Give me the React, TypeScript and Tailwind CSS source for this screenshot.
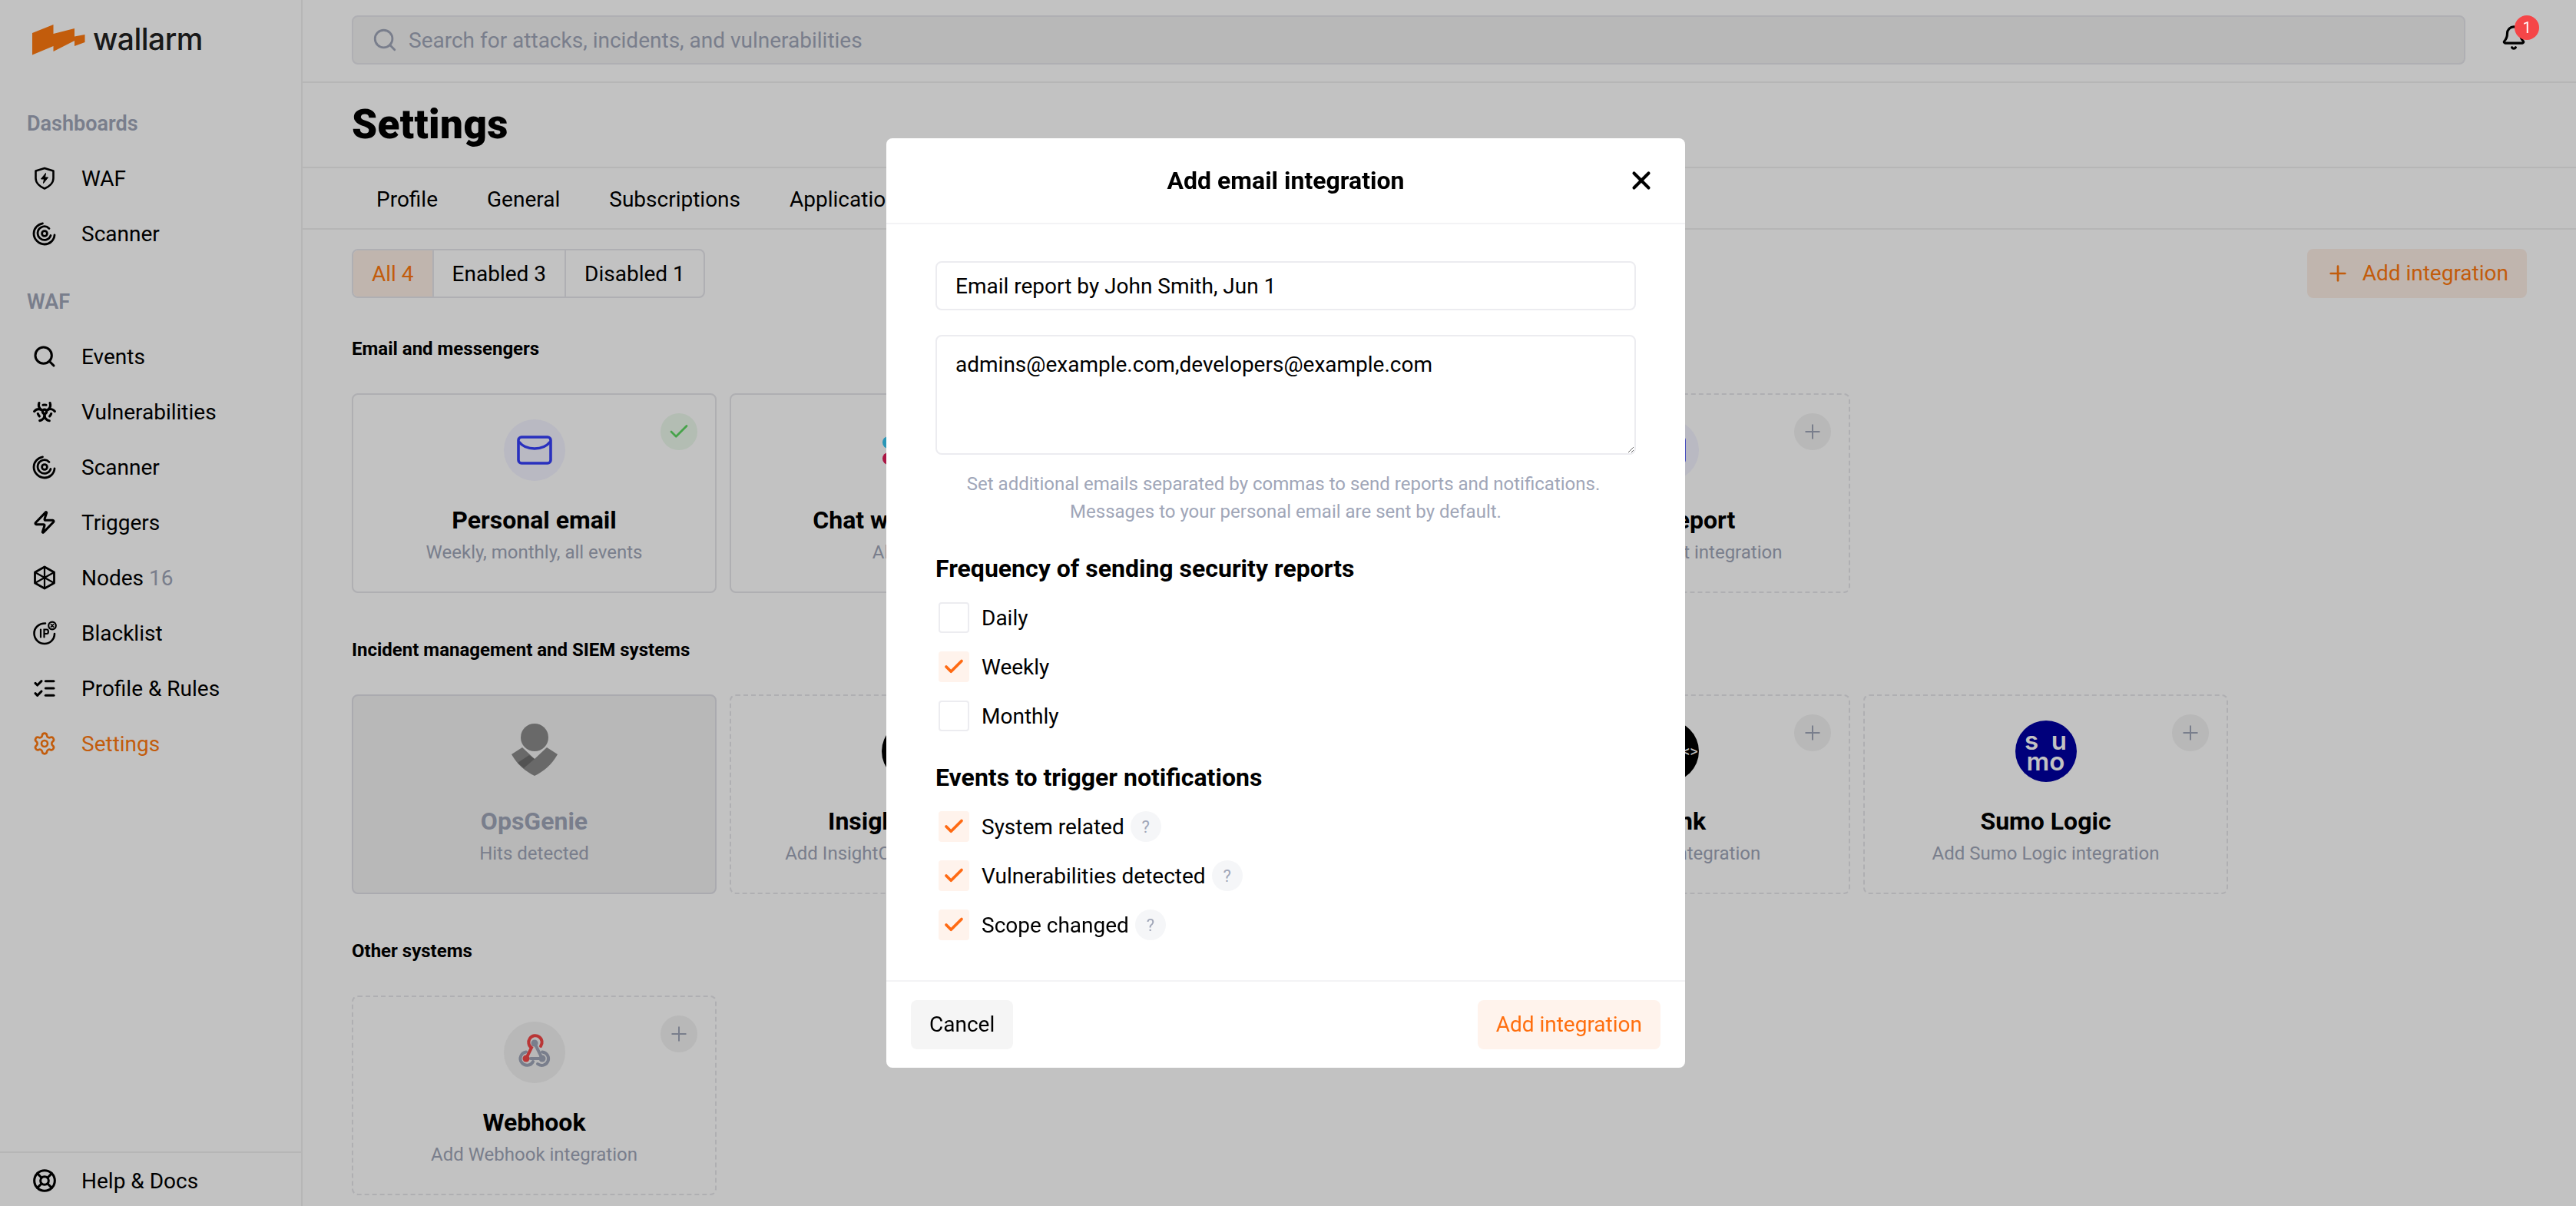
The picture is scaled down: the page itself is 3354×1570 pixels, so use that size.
import type { ReactNode } from 'react'
import { Bell, Biohazard, Check, LifeBuoy, ListChecks, Plus, Search, Settings, X, Zap } from 'lucide-react'

function ShieldIcon() {
  return (
    <svg width="32" height="32" viewBox="0 0 32 32" fill="none" stroke="currentColor" strokeWidth="2.6" strokeLinejoin="round">
      <path d="M16 3 L27.5 6.5 V16 C27.5 22 22 27 16 29.5 C10 27 4.5 22 4.5 16 V6.5 Z" />
      <path d="M17.5 9.5 L11.5 17 H15.5 L14.5 22.5 L20.5 15 H16.5 Z" fill="currentColor" strokeWidth="1" />
    </svg>
  )
}

function ScannerIcon() {
  return (
    <svg width="32" height="32" viewBox="0 0 32 32" fill="none" stroke="currentColor" strokeWidth="2.8" strokeLinecap="round">
      <path d="M29 18 C28.5 25 22.5 30 16 30 C8.5 30 2 23.5 2 16 C2 9.5 7 4 13.5 2.8" />
      <path d="M24 18.5 C22 24.5 15 26 10.5 22.5 C5.5 18.5 6 11 11.5 8 C15 6 19 6.5 22 9.5" />
      <circle cx="16" cy="16" r="3.4" />
    </svg>
  )
}

function NodesIcon() {
  return (
    <svg width="32" height="32" viewBox="0 0 32 32" fill="none" stroke="currentColor" strokeWidth="2.8" strokeLinejoin="round">
      <path d="M16 2 L28.5 9 V23 L16 30 L3.5 23 V9 Z" />
      <path d="M16 2 V30 M3.5 9 L28.5 23 M28.5 9 L3.5 23" strokeWidth="2.2" />
    </svg>
  )
}

function BlacklistIcon() {
  return (
    <svg width="32" height="32" viewBox="0 0 32 32" fill="none" stroke="currentColor" strokeWidth="2.6" strokeLinecap="round">
      <path d="M29 17 C29 24.5 23 30 16 30 C8.5 30 2.5 24 2.5 16.5 C2.5 9 8.5 3.5 17 3.5" />
      <path d="M11 11.5 V21.5 M15.5 21.5 V11.5 H19 C21.5 11.5 21.5 17 19 17 H15.5" strokeWidth="2.2" />
      <circle cx="26" cy="6.5" r="4.8" strokeWidth="2.2" />
      <path d="M24.4 4.9 L27.6 8.1 M27.6 4.9 L24.4 8.1" strokeWidth="1.6" />
    </svg>
  )
}

function Logo() {
  return (
    <div className="flex h-[107px] items-start pl-[42px] pt-[32px]">
      <svg width="69" height="40" viewBox="0 0 69 40" fill="#ff7a10">
        <path d="M0 11 L27.5 0 V12 L55 5 V15.5 L68.5 13 V23 L55 28 V21 L27.5 35 V28 L0 39.5 Z" />
      </svg>
      <span className="ml-[10px] mt-[-5px] font-[Inter,sans-serif] text-[39px] font-medium leading-[48px] tracking-[-0.5px] text-[#222]">wallarm</span>
    </div>
  )
}

function NavLabel({ children, className }: { children: ReactNode; className: string }) {
  return <div className={`h-9 pl-[35px] text-[27px] font-semibold leading-9 text-[#a0a6b8] ${className}`}>{children}</div>
}

function NavItem({ icon, label, count, active }: { icon: ReactNode; label: string; count?: number; active?: boolean }) {
  return (
    <div className={`flex h-[72px] items-center gap-8 pl-[42px] text-[28px] ${active ? 'text-[#ff7a10]' : 'text-black'}`}>
      <span className="flex h-8 w-8 items-center justify-center">{icon}</span>
      <span className="pt-[1px]">
        {label}
        {count && <span className="text-[#a0a6b8]"> {count}</span>}
      </span>
    </div>
  )
}

function Sidebar() {
  return (
    <aside className="flex h-full w-[394px] shrink-0 flex-col border-r-2 border-[#f0f0f0]">
      <Logo />
      <NavLabel className="mt-[36px]">Dashboards</NavLabel>
      <nav className="mt-[17px]">
        <NavItem icon={<ShieldIcon />} label="WAF" />
        <NavItem icon={<ScannerIcon />} label="Scanner" />
      </nav>
      <NavLabel className="mt-[35px]">WAF</NavLabel>
      <nav className="mt-[17px]">
        <NavItem icon={<Search size={32} strokeWidth={2.3} />} label="Events" />
        <NavItem icon={<Biohazard size={34} strokeWidth={2.4} />} label="Vulnerabilities" />
        <NavItem icon={<ScannerIcon />} label="Scanner" />
        <NavItem icon={<Zap size={32} strokeWidth={2.3} />} label="Triggers" />
        <NavItem icon={<NodesIcon />} label="Nodes" count={16} />
        <NavItem icon={<BlacklistIcon />} label="Blacklist" />
        <NavItem icon={<ListChecks size={32} strokeWidth={2.3} />} label="Profile & Rules" />
        <NavItem icon={<Settings size={34} strokeWidth={2} />} label="Settings" active />
      </nav>
      <div className="mt-auto h-[71px] border-t-2 border-[#f0f0f0]">
        <NavItem icon={<LifeBuoy size={32} strokeWidth={2.3} />} label="Help & Docs" />
      </div>
    </aside>
  )
}

function MailIcon() {
  return (
    <svg width="46" height="38" viewBox="0 0 46 38" fill="none" stroke="#3640fa" strokeWidth="3.6" strokeLinejoin="round">
      <rect x="2" y="2" width="42" height="34" rx="4" />
      <path d="M2.5 8 C12 20 34 20 43.5 8" />
    </svg>
  )
}

function SlackIcon() {
  return (
    <svg width="80" height="80" viewBox="0 0 80 80" fill="none" strokeWidth="16" strokeLinecap="round">
      <path d="M9 30 H34" stroke="#36c5f0" />
      <path d="M9 51 H34" stroke="#e01e5a" />
      <path d="M46 10 V34" stroke="#2eb67d" />
      <path d="M46 46 V70" stroke="#ecb22e" />
    </svg>
  )
}

function OpsGenieIcon() {
  return (
    <svg width="80" height="80" viewBox="0 0 80 80">
      <circle cx="40" cy="22" r="18" fill="#8b8b8b" />
      <path d="M10 44 L24 35 L40 50 L56 35 L70 44 C62 58 52 66 40 72 C28 66 18 58 10 44 Z" fill="#8b8b8b" />
      <path d="M18 55 L33 45 L40 50 L26 62 Z" fill="#6e6e6e" />
    </svg>
  )
}

function WebhookIcon() {
  return (
    <svg width="80" height="80" viewBox="0 0 80 80" fill="none" strokeWidth="4" strokeLinecap="round">
      <path d="M40 28 L50 48 H35" stroke="#a0a6b8" />
      <path d="M50 39.5 A8.7 8.7 0 1 1 44 55 M29 39.5 A8.7 8.7 0 1 0 38 52" stroke="#a0a6b8" />
      <circle cx="40" cy="28" r="4.5" fill="#a0a6b8" />
      <circle cx="50" cy="48" r="4.5" fill="#a0a6b8" />
      <path d="M29 48 L36 34 A8.7 8.7 0 1 1 48 32" stroke="#f44848" />
      <circle cx="29" cy="48" r="4.5" fill="#f44848" />
    </svg>
  )
}

type CardProps = {
  icon: ReactNode
  iconBg?: string
  title: string
  subtitle: string
  status?: 'enabled' | 'disabled' | 'add'
}

function IntegrationCard({ icon, iconBg = '', title, subtitle, status = 'add' }: CardProps) {
  const frame =
    status === 'add'
      ? 'border-dashed border-[#e6e6ea]'
      : status === 'disabled'
        ? 'border-[#e0e0e6] bg-[#f2f2f2]'
        : 'border-[#e6e6ea]'
  return (
    <div className={`relative flex h-[260px] flex-col items-center rounded-lg border-2 pt-8 ${frame}`}>
      {status === 'add' && (
        <span className="absolute right-[23px] top-[24px] flex h-12 w-12 items-center justify-center rounded-full bg-[#f2f2f2] text-[#a0a6b8]">
          <Plus size={30} strokeWidth={1.6} />
        </span>
      )}
      {status === 'enabled' && (
        <span className="absolute right-[23px] top-[24px] flex h-12 w-12 items-center justify-center rounded-full bg-[#ebf9eb] text-[#5ed662]">
          <Check size={30} strokeWidth={2.2} />
        </span>
      )}
      <div className={`flex h-20 w-20 items-center justify-center rounded-full ${iconBg}`}>{icon}</div>
      <div className={`mt-[31px] text-[32px] font-bold leading-10 ${status === 'disabled' ? 'text-[#a0a6b8]' : 'text-black'}`}>{title}</div>
      <div className="mt-[6px] text-[24px] leading-8 text-[#a0a6b8]">{subtitle}</div>
    </div>
  )
}

function CardGrid({ children }: { children: ReactNode }) {
  return <div className="mt-10 grid grid-cols-[repeat(5,475px)] gap-x-[17px]">{children}</div>
}

function SectionLabel({ children, className }: { children: ReactNode; className: string }) {
  return <h3 className={`h-9 text-[24px] font-bold leading-9 text-black ${className}`}>{children}</h3>
}

function MainPage() {
  const tabs = ['Profile', 'General', 'Subscriptions', 'Applications', 'Integrations', 'Users', 'Activity log']
  return (
    <main className="flex h-full min-w-0 flex-1 flex-col">
      <div className="relative flex h-[108px] items-start border-b-2 border-[#f0f0f0] pl-16 pr-[64px] pt-5">
        <div className="flex h-16 w-[2752px] items-center gap-[14px] rounded-lg border-2 border-[#e6e6ec] bg-[#f2f2f2] pl-[24px] text-[#a0a6b8]">
          <Search size={34} strokeWidth={2} />
          <input className="w-[1200px] bg-transparent pt-[2px] text-[28px] outline-none placeholder:text-[#a0a6b8]" placeholder="Search for attacks, incidents, and vulnerabilities" />
        </div>
        <Bell className="ml-[46px] mt-[12px] text-black" size={34} strokeWidth={2.2} />
        <span className="absolute left-[2880px] top-[20px] z-20 flex h-8 w-8 items-center justify-center rounded-full bg-[#f54648] text-[20px] text-white">1</span>
      </div>
      <div className="flex h-[111px] items-center border-b-2 border-[#f0f0f0] pl-16">
        <h1 className="text-[53px] font-black tracking-[0.4px] text-black">Settings</h1>
      </div>
      <div className="flex h-[80px] items-center gap-[64px] border-b-2 border-[#f0f0f0] pl-24 pt-[3px] text-[28px] text-black">
        {tabs.map((tab) => (
          <span key={tab}>{tab}</span>
        ))}
      </div>
      <div className="px-16 pt-[25px]">
        <div className="flex items-start justify-between">
          <div className="flex h-16 overflow-hidden rounded-lg border-2 border-[#e6e6ec] text-[28px]">
            <span className="flex items-center bg-[#fdeee5] px-6 pt-[1px] text-[#ff7a10]">All 4</span>
            <span className="flex items-center border-l-2 border-[#e6e6ec] px-6 pt-[1px] text-black">Enabled 3</span>
            <span className="flex items-center border-l-2 border-[#e6e6ec] px-6 pt-[1px] text-black">Disabled 1</span>
          </div>
          <button className="flex h-16 items-center gap-4 rounded-lg bg-[#fdeee5] pl-6 pr-6 text-[28px] text-[#ff7a10]">
            <Plus size={32} strokeWidth={2} />
            Add integration
          </button>
        </div>

        <SectionLabel className="mt-12">Email and messengers</SectionLabel>
        <CardGrid>
          <IntegrationCard status="enabled" iconBg="bg-[#f3f3ff]" icon={<MailIcon />} title="Personal email" subtitle="Weekly, monthly, all events" />
          <IntegrationCard status="enabled" icon={<SlackIcon />} title="Chat with Support" subtitle="All events" />
          <IntegrationCard icon={<span className="h-10 w-10 rounded-full bg-[#36c5f0]" />} title="Telegram" subtitle="Add Telegram integration" />
          <IntegrationCard iconBg="bg-[#f3f3ff]" icon={<MailIcon />} title="Email report" subtitle="Add email report integration" />
        </CardGrid>

        <SectionLabel className="mt-14">Incident management and SIEM systems</SectionLabel>
        <CardGrid>
          <IntegrationCard status="disabled" icon={<OpsGenieIcon />} title="OpsGenie" subtitle="Hits detected" />
          <IntegrationCard iconBg="bg-black" icon={null} title="InsightConnect" subtitle="Add InsightConnect integration" />
          <IntegrationCard iconBg="bg-[#06ac38]" icon={null} title="PagerDuty" subtitle="Add PagerDuty integration" />
          <IntegrationCard iconBg="bg-black" icon={<span className="ml-[58px] text-[20px] text-white">&lt;&gt;</span>} title="Splunk" subtitle="Add Splunk integration" />
          <IntegrationCard
            iconBg="bg-[#0000a2]"
            icon={
              <span className="w-full text-center font-[Inter,sans-serif] text-[33px] font-semibold leading-[27px] text-white">
                s&nbsp;&nbsp;u
                <br />
                mo
              </span>
            }
            title="Sumo Logic"
            subtitle="Add Sumo Logic integration"
          />
        </CardGrid>

        <SectionLabel className="mt-14">Other systems</SectionLabel>
        <CardGrid>
          <IntegrationCard iconBg="bg-[#f2f2f2]" icon={<WebhookIcon />} title="Webhook" subtitle="Add Webhook integration" />
        </CardGrid>
      </div>
    </main>
  )
}

function CheckRow({ label, checked, hint }: { label: string; checked?: boolean; hint?: boolean }) {
  return (
    <div className="ml-1 flex h-10 items-center text-[28px] text-black">
      <span className={`flex h-10 w-10 items-center justify-center rounded ${checked ? 'bg-[#fff3ec] text-[#ff6a13]' : 'border-2 border-[#ececf0]'}`}>
        {checked && <Check size={30} strokeWidth={3} />}
      </span>
      <span className="ml-4 pt-[1px]">{label}</span>
      {hint && <span className="ml-[8px] flex h-10 w-10 items-center justify-center rounded-full bg-[#f5f6f8] text-[22px] text-[#a0a6b8]">?</span>}
    </div>
  )
}

function AddEmailModal() {
  return (
    <div className="fixed inset-0 z-10 flex items-center justify-center bg-black/24 pr-[6px]">
      <div className="flex h-[1210px] w-[1040px] flex-col rounded-lg bg-white">
        <div className="relative flex h-[112px] shrink-0 items-center justify-center border-b-2 border-[#f3f3f5]">
          <h2 className="text-[32px] font-bold text-black">Add email integration</h2>
          <X className="absolute right-[38px] top-[36px] text-black" size={38} strokeWidth={2.6} />
        </div>
        <div className="flex-1 px-16 pt-12">
          <input
            className="h-16 w-full rounded-lg border-2 border-[#ececf0] px-6 text-[28px] text-black outline-none"
            defaultValue="Email report by John Smith, Jun 1"
          />
          <textarea
            className="mt-8 block h-[156px] w-full rounded-lg border-2 border-[#ececf0] px-6 py-[16px] text-[28px] text-black outline-none"
            defaultValue="admins@example.com,developers@example.com"
          />
          <p className="mt-5 text-center text-[24px] leading-9 text-[#a0a6b8]">
            Set additional emails separated by commas to send reports and notifications.&nbsp;
            <br />
            Messages to your personal email are sent by default.
          </p>
          <h3 className="mt-9 text-[32px] font-bold leading-10 text-black">Frequency of sending security reports</h3>
          <div className="mt-6 flex flex-col gap-6">
            <CheckRow label="Daily" />
            <CheckRow label="Weekly" checked />
            <CheckRow label="Monthly" />
          </div>
          <h3 className="mt-10 text-[32px] font-bold leading-10 text-black">Events to trigger notifications</h3>
          <div className="mt-6 flex flex-col gap-6">
            <CheckRow label="System related" checked hint />
            <CheckRow label="Vulnerabilities detected" checked hint />
            <CheckRow label="Scope changed" checked hint />
          </div>
        </div>
        <div className="flex shrink-0 items-center justify-between border-t-2 border-[#f3f3f5] px-8 py-6 text-[28px]">
          <button className="h-16 rounded-lg bg-[#f5f5f5] px-6 text-black">Cancel</button>
          <button className="h-16 rounded-lg bg-[#fff3ec] px-6 text-[#ff6f0f]">Add integration</button>
        </div>
      </div>
    </div>
  )
}

export default function App() {
  return (
    <div className="flex h-[1570px] w-full overflow-hidden bg-white font-[Roboto,sans-serif]">
      <Sidebar />
      <MainPage />
      <AddEmailModal />
    </div>
  )
}
